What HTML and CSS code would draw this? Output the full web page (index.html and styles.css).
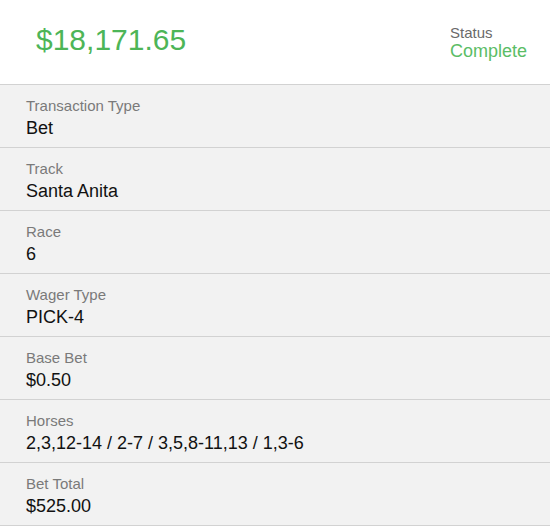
FILE: index.html
```html
<!DOCTYPE html>
<html>
<head>
<meta charset="utf-8">
<link rel="stylesheet" href="styles.css">
</head>
<body>
<div class="header">
  <div class="amount">$18,171.65</div>
  <div class="status">
    <div class="status-label">Status</div>
    <div class="status-value">Complete</div>
  </div>
</div>
<div class="list">
  <div class="row"><div class="label">Transaction Type</div><div class="value">Bet</div></div>
  <div class="row"><div class="label">Track</div><div class="value">Santa Anita</div></div>
  <div class="row"><div class="label">Race</div><div class="value">6</div></div>
  <div class="row"><div class="label">Wager Type</div><div class="value">PICK-4</div></div>
  <div class="row"><div class="label">Base Bet</div><div class="value">$0.50</div></div>
  <div class="row"><div class="label">Horses</div><div class="value">2,3,12-14 / 2-7 / 3,5,8-11,13 / 1,3-6</div></div>
  <div class="row"><div class="label">Bet Total</div><div class="value">$525.00</div></div>
</div>
</body>
</html>
```
FILE: styles.css
```css
html, body {
  margin: 0;
  padding: 0;
  background: #f2f2f2;
  font-family: "Liberation Sans", Arial, sans-serif;
}
.header {
  height: 84px;
  background: #ffffff;
  display: flex;
  align-items: center;
  justify-content: space-between;
  padding: 0 23px 0 36px;
}
.amount {
  font-size: 30px;
  line-height: 36px;
  color: #4db557;
  margin-bottom: 4px;
}
.status-label {
  font-size: 15px;
  line-height: 17px;
  color: #6a6a6a;
}
.status-value {
  font-size: 18px;
  line-height: 20px;
  color: #5bbd66;
}
.list {
  border-bottom: 1px solid #d2d2d2;
}
.row {
  border-top: 1px solid #d2d2d2;
  padding: 12px 26px 8px;
  display: flex;
  flex-direction: column;
  gap: 2px;
}
.label {
  font-size: 15px;
  line-height: 18px;
  color: #7a7a7a;
}
.value {
  font-size: 18px;
  line-height: 22px;
  color: #111111;
}
```
